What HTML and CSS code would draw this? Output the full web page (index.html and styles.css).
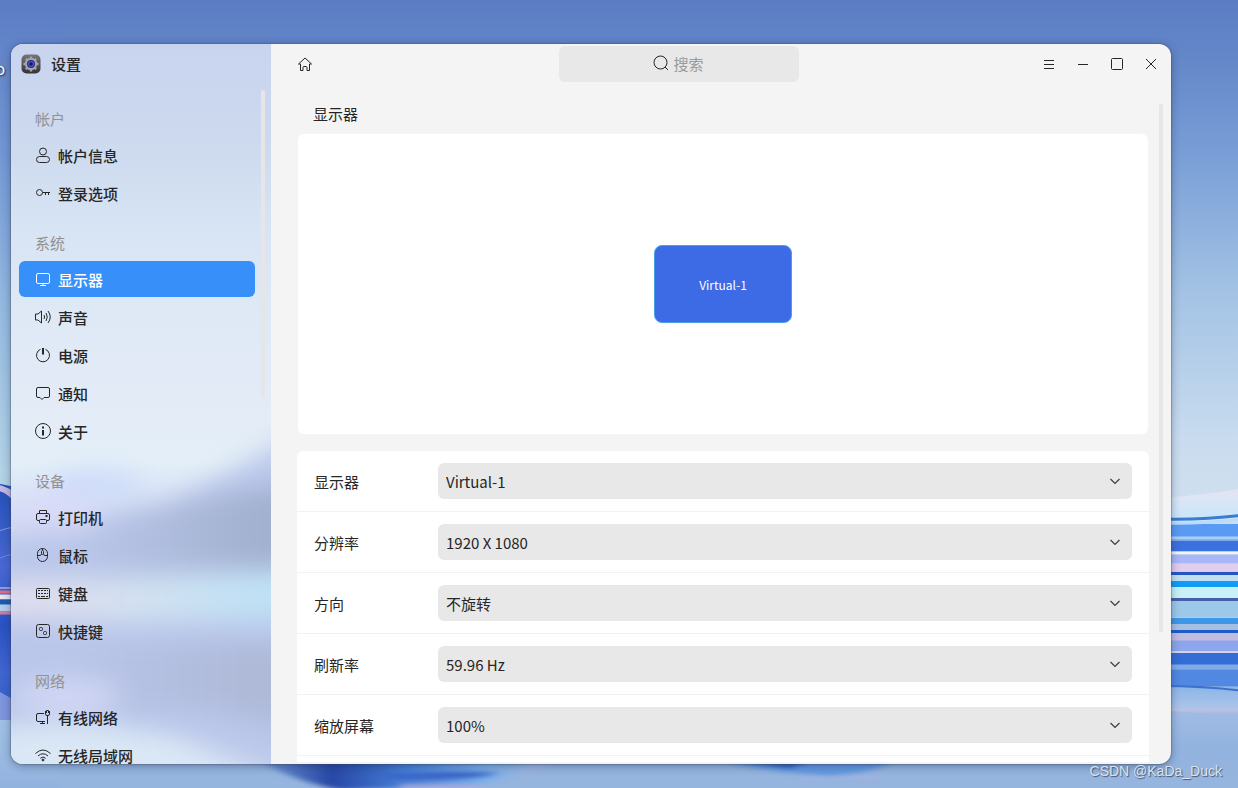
FILE: index.html
```html
<!DOCTYPE html>
<html lang="zh-CN">
<head>
<meta charset="utf-8">
<title>设置</title>
<link rel="stylesheet" href="styles.css">
</head>
<body class="desktop">
<svg class="wallpaper" viewBox="0 0 1238 788" preserveAspectRatio="none" aria-hidden="true">
  <defs>
    <linearGradient id="sky" x1="0" y1="0" x2="0" y2="1">
      <stop offset="0" stop-color="#5b7cc4"/><stop offset=".08" stop-color="#6588c9"/><stop offset=".2" stop-color="#7a9fd7"/>
      <stop offset=".38" stop-color="#a5c4e5"/><stop offset=".56" stop-color="#c9dcef"/><stop offset=".64" stop-color="#cfdfee"/>
      <stop offset=".9" stop-color="#a0bce4"/><stop offset=".95" stop-color="#92b3df"/><stop offset="1" stop-color="#96b5de"/>
    </linearGradient>
    <linearGradient id="leftEdge" x1="0" y1="0" x2="0" y2="1">
      <stop offset="0" stop-color="#5b7cc4"/><stop offset=".2" stop-color="#7498d4"/><stop offset=".38" stop-color="#93b8e0"/>
      <stop offset=".6" stop-color="#b3d3e6"/><stop offset=".9" stop-color="#a3c4e6"/><stop offset="1" stop-color="#93b3df"/>
    </linearGradient>
    <linearGradient id="foam" x1="0" y1="0" x2="0" y2="1">
      <stop offset="0" stop-color="#e6e4f3"/><stop offset="1" stop-color="#c4e7fa"/>
    </linearGradient>
    <linearGradient id="tail" x1="0" y1="0" x2="0" y2="1">
      <stop offset="0" stop-color="#8db5e8"/><stop offset=".7" stop-color="#aac4e8"/><stop offset=".8" stop-color="#b9c1e2"/><stop offset="1" stop-color="#9ab6e1"/>
    </linearGradient>
    <linearGradient id="fold" x1="0" y1="0" x2="0" y2="1">
      <stop offset="0" stop-color="#2450b8"/><stop offset=".35" stop-color="#4a68d4"/><stop offset=".6" stop-color="#2a52c4"/><stop offset=".8" stop-color="#4166d0"/><stop offset="1" stop-color="#2d60c8"/>
    </linearGradient>
    <linearGradient id="petal"><stop offset="0" stop-color="#7aa2de"/><stop offset=".25" stop-color="#2747a5"/><stop offset=".5" stop-color="#4580d8"/><stop offset=".75" stop-color="#79b0ea"/><stop offset="1" stop-color="#b4b8dc"/></linearGradient>
    <filter id="soft" x="-20%" y="-60%" width="140%" height="220%" color-interpolation-filters="sRGB"><feGaussianBlur stdDeviation="5 2"/></filter>
    <filter id="fine" x="-5%" y="-5%" width="110%" height="110%" color-interpolation-filters="sRGB"><feGaussianBlur stdDeviation="0.6"/></filter>
  </defs>
  <rect width="1238" height="788" fill="url(#sky)"/>
  <rect width="60" height="788" fill="url(#leftEdge)"/>
  <g filter="url(#fine)">
    <path d="M-4 483L20 488V720H-4Z" fill="url(#fold)"/>
    <path d="M-4 484Q8 486 20 496V508Q8 492-4 490Z" fill="#c5b8e8"/>
    <path d="M-4 532Q5 528 20 526" stroke="#8b9ae6" fill="none"/>
    <path d="M-4 560Q5 555 20 553" stroke="#7388dc" fill="none"/>
    <path d="M-4 588H20" stroke="#8aa2dc" stroke-width="2"/>
    <path d="M-4 592H20" stroke="#e0708a" stroke-width="3"/>
    <path d="M-4 597H20" stroke="#ece4ee" stroke-width="5"/>
    <path d="M-4 602H20" stroke="#1b5cae" stroke-width="5"/>
    <path d="M-4 608H20" stroke="#b4cdeb" stroke-width="7"/>
    <path d="M-4 613H20" stroke="#ce7f9f" stroke-width="3"/>
    <path d="M-4 690L20 703V720H-4Z" fill="#7f95dc"/>
  </g>
  <g filter="url(#fine)">
    <path d="M1160 498Q1205 495 1244 488V522H1160Z" fill="url(#foam)"/>
    <path d="M1160 524H1244V540H1160Z" fill="#5b9af3"/>
    <path d="M1160 519Q1205 520 1244 515" stroke="#3d7ad4" stroke-width="3" fill="none"/>
    <path d="M1160 523Q1205 524 1244 519" stroke="#bbdcf8" stroke-width="3" fill="none"/>
    <path d="M1160 538H1244" stroke="#a9d0f6" stroke-width="3"/>
    <path d="M1160 546H1244" stroke="#3b70e0" stroke-width="11"/>
    <path d="M1160 553H1244" stroke="#f4f4fb" stroke-width="3"/>
    <path d="M1160 559H1244" stroke="#a8b7f8" stroke-width="9"/>
    <path d="M1160 567.500H1244" stroke="#e0cdf0" stroke-width="8"/>
    <path d="M1160 573.500H1244" stroke="#2456c2" stroke-width="3"/>
    <path d="M1160 578H1244" stroke="#c2def2" stroke-width="6"/>
    <path d="M1160 584H1244" stroke="#109bf6" stroke-width="6"/>
    <path d="M1160 592.500H1244" stroke="#c9f0f8" stroke-width="11"/>
    <path d="M1160 599.500H1244" stroke="#4560a8" stroke-width="3"/>
    <path d="M1160 609H1244" stroke="#9cc8ea" stroke-width="16"/>
    <path d="M1160 621H1244" stroke="#3e96e7" stroke-width="6"/>
    <path d="M1160 627H1244" stroke="#a6c0e4" stroke-width="6"/>
    <path d="M1160 631.500H1244" stroke="#1d5cc6" stroke-width="3"/>
    <path d="M1160 637H1244" stroke="#c0bce0" stroke-width="8"/>
    <path d="M1160 646H1244" stroke="#8ca5ed" stroke-width="11"/>
    <path d="M1160 652H1244" stroke="#d8d2e6" stroke-width="2"/>
    <path d="M1160 659H1244" stroke="#356cd6" stroke-width="12"/>
    <path d="M1160 667H1244" stroke="#82aae6" stroke-width="5"/>
    <path d="M1160 678H1244" stroke="#5189e2" stroke-width="17"/>
    <path d="M1160 687H1244V716Q1205 714 1160 710Z" fill="url(#tail)"/>
    <path d="M1160 686Q1205 686 1244 691" stroke="#3e72cc" stroke-width="2" fill="none"/>
  </g>
  <g filter="url(#soft)">
    <path d="M255 758H560Q530 776 470 786L340 790Q290 780 255 758Z" fill="url(#petal)"/>
    <path d="M375 776Q450 770 500 773Q470 781 400 779Z" fill="#3b62c6"/>
    <path d="M400 786H480" stroke="#b6a8dc" stroke-width="3"/>
    <path d="M710 758H900Q880 772 830 776Q760 772 710 758Z" fill="#6299e2"/>
    <path d="M735 760H810L790 768Z" fill="#3059b8"/>
    <path d="M800 777H880" stroke="#abb4e0" stroke-width="2"/>
  </g>
</svg>

<div class="window">
  <aside class="sidebar">
    <svg class="sidebar-glass" viewBox="0 0 260 720" preserveAspectRatio="none" aria-hidden="true">
      <defs>
        <linearGradient id="glass" x1="0" y1="0" x2="0" y2="1">
          <stop offset="0" stop-color="#c9d4ee"/><stop offset=".13" stop-color="#ccd9ee"/><stop offset=".25" stop-color="#d7e4f4"/><stop offset=".38" stop-color="#dfe9f6"/>
          <stop offset=".5" stop-color="#e3ebf7"/><stop offset=".58" stop-color="#e3eff8"/><stop offset=".66" stop-color="#d3dbf6"/><stop offset="1" stop-color="#d8e2f3"/>
        </linearGradient>
        <linearGradient id="shade" gradientUnits="userSpaceOnUse" x1="60" y1="0" x2="250" y2="0"><stop offset="0" stop-color="#a3b1d0" stop-opacity="0"/><stop offset="1" stop-color="#a3b1d0"/></linearGradient>
        <linearGradient id="shadeLow" gradientUnits="userSpaceOnUse" x1="50" y1="0" x2="230" y2="0"><stop offset="0" stop-color="#afbad9" stop-opacity="0"/><stop offset="1" stop-color="#afbad9"/></linearGradient>
        <linearGradient id="band" gradientUnits="userSpaceOnUse" x1="0" y1="0" x2="250" y2="0"><stop offset="0" stop-color="#dfdcee"/><stop offset=".5" stop-color="#d3e1f0"/><stop offset="1" stop-color="#bfe1f5"/></linearGradient>
        <filter id="haze" filterUnits="userSpaceOnUse" x="-100" y="340" width="460" height="480" color-interpolation-filters="sRGB"><feGaussianBlur stdDeviation="12"/></filter>
      </defs>
      <rect width="260" height="720" fill="url(#glass)"/>
      <g filter="url(#haze)">
        <path d="M320 370Q230 425 150 462Q60 480-60 505V690H160L320 750Z" fill="#bac7ea"/>
        <ellipse cx="85" cy="440" rx="48" ry="12" fill="#cbdafa"/>
        <path d="M320 440Q210 445 60 480V525H320Z" fill="url(#shade)"/>
        <ellipse cx="48" cy="468" rx="44" ry="18" fill="#dadbf7"/>
        <path d="M-60 536L120 534L320 522V575L120 578L-60 574Z" fill="url(#band)"/>
        <path d="M320 600H50V665H200L320 690Z" fill="url(#shadeLow)"/>
        <ellipse cx="55" cy="652" rx="54" ry="16" fill="#d2d7f5"/>
        <path d="M-60 688Q90 665 165 697Q220 715 240 780H-60Z" fill="#dae7f5"/>
      </g>
    </svg>

    <header class="brand">
      <svg class="brand-icon" viewBox="0 0 20 20" aria-hidden="true">
        <defs><linearGradient id="tile" x1="0" y1="0" x2="0" y2="1"><stop offset="0" stop-color="#74767a"/><stop offset="1" stop-color="#333437"/></linearGradient></defs>
        <rect x=".5" y=".5" width="19" height="19" rx="5" fill="url(#tile)"/>
        <g fill="#a3a5ac"><circle cx="10" cy="10" r="6.200"/><g><rect x="8.800" y="2.400" width="2.400" height="15.200" rx=".6"/><rect x="2.400" y="8.800" width="15.200" height="2.400" rx=".6"/></g><g transform="rotate(45 10 10)"><rect x="8.800" y="2.600" width="2.400" height="14.800" rx=".6"/><rect x="2.600" y="8.800" width="14.800" height="2.400" rx=".6"/></g></g>
        <circle cx="10" cy="10" r="4" fill="#32269a"/><circle cx="10" cy="10" r="2.800" fill="#4a62d8"/><circle cx="10" cy="10" r="1.800" fill="#1b1c33"/>
      </svg>
      <h1 class="brand-name">设置</h1>
    </header>

    <nav class="nav">
      <section class="nav-group">
        <h2 class="nav-title">帐户</h2>
        <a class="nav-item" href="#account"><svg class="icon" viewBox="0 0 16 16"><circle cx="8" cy="4.500" r="3.500"/><rect x="1.500" y="9.500" width="13" height="6" rx="3"/></svg>帐户信息</a>
        <a class="nav-item" href="#login"><svg class="icon" viewBox="0 0 16 16"><circle cx="4.500" cy="7.500" r="3"/><path d="M7.500 7.500H15M10.500 7.500V10M13.500 7.500V10"/></svg>登录选项</a>
      </section>
      <section class="nav-group">
        <h2 class="nav-title">系统</h2>
        <a class="nav-item nav-item-active" href="#display" aria-current="page"><svg class="icon" viewBox="0 0 16 16"><rect x="1.500" y="2.500" width="13" height="10" rx="1.500"/><path d="M8 12.500V14M5 14.500H11"/></svg>显示器</a>
        <a class="nav-item" href="#sound"><svg class="icon" viewBox="0 0 16 16"><path d="M.5 5H3L6.500 2V14L3 11H.5ZM9 6Q10.300 8 9 10M11 4Q13.600 8 11 12M13 2Q17.500 8 13 14"/></svg>声音</a>
        <a class="nav-item" href="#power"><svg class="icon" viewBox="0 0 16 16"><path d="M5.500 2.300A6.500 6.500 0 1 0 10.500 2.300"/><path d="M8 1V7.500" stroke-width="2"/></svg>电源</a>
        <a class="nav-item" href="#notice"><svg class="icon" viewBox="0 0 16 16"><path d="M3 2.500H13Q14.500 2.500 14.500 4V11Q14.500 12.500 13 12.500H9L7 14.500L5 12.500H3Q1.500 12.500 1.500 11V4Q1.500 2.500 3 2.500Z"/></svg>通知</a>
        <a class="nav-item" href="#about"><svg class="icon" viewBox="0 0 16 16"><circle cx="8" cy="8" r="7.500"/><path d="M8 3.500V5.500M8 7V12.500" stroke-width="2"/></svg>关于</a>
      </section>
      <section class="nav-group">
        <h2 class="nav-title">设备</h2>
        <a class="nav-item" href="#printer"><svg class="icon" viewBox="0 0 16 16"><path d="M4.500 4.500V1.500H11.500V4.500M4.500 11.500H3Q1.500 11.500 1.500 10V6Q1.500 4.500 3 4.500H13Q14.500 4.500 14.500 6V10Q14.500 11.500 13 11.500H11.500"/><rect x="4.500" y="10.500" width="7" height="4" rx="1"/><path d="M10.500 7H12.500" stroke-width="2"/></svg>打印机</a>
        <a class="nav-item" href="#mouse"><svg class="icon" viewBox="0 0 16 16"><rect x="2.500" y="1.500" width="10" height="13" rx="5"/><path d="M2.500 8.500H5.500L6.500 7M12.500 8.500H9.500L8.500 7M7.500 1.500V3"/><rect x="6.500" y="3.500" width="2" height="4" rx="1"/></svg>鼠标</a>
        <a class="nav-item" href="#keyboard"><svg class="icon" viewBox="0 0 16 16"><rect x="1.500" y="3.500" width="13" height="10" rx="1"/><path d="M3 5.500H13M3 8.500H13M3 11.500H5M11 11.500H13" stroke-dasharray="2 1"/><path d="M6 11.500H10"/></svg>键盘</a>
        <a class="nav-item" href="#shortcut"><svg class="icon" viewBox="0 0 16 16"><rect x="1.500" y="1.500" width="13" height="13" rx="2"/><rect x="4.500" y="4.500" width="3" height="3" rx="1"/><rect x="8.500" y="8.500" width="3" height="3" rx="1"/></svg>快捷键</a>
      </section>
      <section class="nav-group">
        <h2 class="nav-title">网络</h2>
        <a class="nav-item" href="#wired"><svg class="icon" viewBox="0 0 16 16"><path d="M9 4.500H3Q1.500 4.500 1.500 6V11Q1.500 12.500 3 12.500H10M7.500 12.500V14.500M5 14.500H10M12.500 6.500V15M10.500 2V5Q10.500 6.500 12 6.500H13Q14.500 6.500 14.500 5V2M11.500 4V1.500H13.500V4"/></svg>有线网络</a>
        <a class="nav-item" href="#wifi"><svg class="icon" viewBox="0 0 16 16"><path d="M.5 6.500Q8-.5 15.500 6.500M3 9Q8 4.500 13 9M5.300 11.300Q8 8.700 10.700 11.300"/><circle cx="8" cy="13" r=".9" fill="currentColor"/></svg>无线局域网</a>
      </section>
    </nav>
    <div class="sidebar-thumb"></div>
  </aside>

  <main class="content">
    <header class="titlebar">
      <button class="tool home" type="button" aria-label="主页"><svg class="icon" viewBox="0 0 16 16"><path d="M1.500 8L8 2L14.500 8H12.500V14.500H10V11.500Q10 10.500 9 10.500H7Q6 10.500 6 11.500V14.500H3.500V8Z"/></svg></button>
      <label class="search">
        <svg class="icon search-icon" viewBox="0 0 16 16"><circle cx="7.500" cy="7.500" r="6.500"/><path d="M12 12L15 15"/></svg>
        <input class="search-input" type="text" placeholder="搜索" aria-label="搜索">
      </label>
      <div class="controls">
        <button class="tool" type="button" aria-label="菜单"><svg class="icon" viewBox="0 0 16 16"><path d="M3 4.500H13M3 8.500H13M3 12.500H13"/></svg></button>
        <button class="tool" type="button" aria-label="最小化"><svg class="icon" viewBox="0 0 16 16"><path d="M3 8.500H13"/></svg></button>
        <button class="tool" type="button" aria-label="最大化"><svg class="icon" viewBox="0 0 16 16"><rect x="2.500" y="2.500" width="11" height="11" rx="1"/></svg></button>
        <button class="tool" type="button" aria-label="关闭"><svg class="icon" viewBox="0 0 16 16"><path d="M3 3L13 13M13 3L3 13"/></svg></button>
      </div>
    </header>

    <div class="page">
      <h2 class="page-title">显示器</h2>
      <section class="preview"><div class="screen">Virtual-1</div></section>
      <form class="form">
        <div class="row"><label class="row-label" for="monitor">显示器</label><div class="pick"><select class="select" id="monitor"><option>Virtual-1</option></select><svg class="chevron" viewBox="0 0 10 10"><path d="M.5 3L5 7.500L9.500 3"/></svg></div></div>
        <div class="row"><label class="row-label" for="resolution">分辨率</label><div class="pick"><select class="select" id="resolution"><option>1920 X 1080</option></select><svg class="chevron" viewBox="0 0 10 10"><path d="M.5 3L5 7.500L9.500 3"/></svg></div></div>
        <div class="row"><label class="row-label" for="rotation">方向</label><div class="pick"><select class="select" id="rotation"><option>不旋转</option></select><svg class="chevron" viewBox="0 0 10 10"><path d="M.5 3L5 7.500L9.500 3"/></svg></div></div>
        <div class="row"><label class="row-label" for="refresh">刷新率</label><div class="pick"><select class="select" id="refresh"><option>59.96 Hz</option></select><svg class="chevron" viewBox="0 0 10 10"><path d="M.5 3L5 7.500L9.500 3"/></svg></div></div>
        <div class="row"><label class="row-label" for="scale">缩放屏幕</label><div class="pick"><select class="select" id="scale"><option>100%</option></select><svg class="chevron" viewBox="0 0 10 10"><path d="M.5 3L5 7.500L9.500 3"/></svg></div></div>
        <div class="row row-empty"></div>
      </form>
    </div>
    <div class="content-thumb"></div>
  </main>
</div>
<span class="desktop-label">o</span>
<span class="watermark">CSDN @KaDa_Duck</span>
</body>
</html>
```
FILE: styles.css
```css
* {
  box-sizing: border-box;
}

.desktop {
  position: relative;
  display: flex;
  height: 100vh;
  margin: 0;
  padding: 44px 67px 24px 11px;
  overflow: hidden;
  font-family: "Noto Sans CJK SC", "Noto Sans", sans-serif;
  font-size: 15px;
  line-height: 22px;
  color: #262626;
}

.wallpaper,
.sidebar-glass {
  position: absolute;
  inset: 0;
  width: 100%;
  height: 100%;
}

.window {
  position: relative;
  flex: 1;
  display: flex;
  min-width: 0;
  overflow: hidden;
  border-radius: 12px;
  background: #f4f4f4;
  box-shadow: 0 0 1px 1px rgba(60, 70, 90, 0.3), 0 2px 10px rgba(20, 35, 70, 0.4);
}

.icon {
  flex: none;
  width: 16px;
  height: 16px;
  fill: none;
  stroke: currentColor;
  stroke-width: 1;
}

/* Sidebar */

.sidebar {
  position: relative;
  flex: none;
  display: flex;
  flex-direction: column;
  width: 260px;
  overflow: hidden;
}

.brand {
  position: relative;
  flex: none;
  display: flex;
  align-items: center;
  gap: 10px;
  height: 40px;
  padding: 0 10px;
}

.brand-icon {
  width: 20px;
  height: 20px;
}

.brand-name {
  margin: 0;
  font-size: 15px;
  font-weight: 500;
}

.nav {
  position: relative;
  flex: 1;
  display: flex;
  flex-direction: column;
  gap: 14px;
  min-height: 0;
  padding: 17px 16px 0 8px;
}

.nav-group {
  display: flex;
  flex-direction: column;
}

.nav-title {
  margin: 0;
  padding: 0 16px;
  font-size: 15px;
  font-weight: 400;
  line-height: 36px;
  color: #929292;
}

.nav-item {
  display: flex;
  align-items: center;
  gap: 7px;
  height: 36px;
  padding: 2px 16px 0;
  border-radius: 6px;
  font-weight: 500;
  color: #262626;
  text-decoration: none;
}

.nav-item .icon {
  margin-bottom: 2px;
}

.nav-item + .nav-item {
  margin-top: 2px;
}

.nav-item-active {
  background: #3790fa;
  color: #fff;
}

.sidebar-thumb,
.content-thumb {
  position: absolute;
  width: 4px;
  border-radius: 2px;
  background: #e6e6e6;
}

.sidebar-thumb {
  top: 46px;
  right: 6px;
  height: 307px;
}

.content-thumb {
  top: 60px;
  right: 8px;
  height: 528px;
}

/* Title bar */

.content {
  position: relative;
  flex: 1;
  display: flex;
  flex-direction: column;
  min-width: 0;
  padding-bottom: 2px;
}

.titlebar {
  flex: none;
  display: flex;
  align-items: center;
  justify-content: space-between;
  height: 40px;
  padding: 0 5px 0 19px;
}

.tool {
  display: grid;
  place-items: center;
  width: 30px;
  height: 30px;
  padding: 0;
  border: 0;
  border-radius: 6px;
  background: none;
  color: #262626;
}

.home {
  margin-right: 4px;
}

.controls {
  display: flex;
  gap: 4px;
}

.search {
  display: flex;
  align-items: center;
  justify-content: center;
  gap: 5px;
  width: 240px;
  height: 36px;
  border-radius: 6px;
  background: #e8e8e8;
}

.search-icon {
  margin-bottom: 2px;
}

.search-input {
  width: 32px;
  padding: 0;
  border: 0;
  outline: 0;
  background: none;
  font: inherit;
}

.search-input::placeholder {
  color: #9a9a9a;
}

/* Display page */

.page {
  flex: 1;
  display: flex;
  flex-direction: column;
  min-height: 0;
  padding: 19px 22px 0 26px;
  overflow: hidden;
}

.page-title {
  flex: none;
  margin: 0 0 9px;
  padding: 0 16px;
  font-size: 15px;
  font-weight: 400;
}

.preview {
  flex: none;
  display: grid;
  place-items: center;
  height: 300px;
  margin: 0 1px 17px;
  border-radius: 6px;
  background: #fff;
}

.screen {
  display: grid;
  place-items: center;
  width: 138px;
  height: 78px;
  padding-top: 2px;
  border: 1px solid #4aa0e6;
  border-radius: 8px;
  background: #3d6be5;
  font-size: 12px;
  color: #fff;
}

.form {
  flex: none;
  border-radius: 6px;
  background: #fff;
}

.row {
  display: flex;
  align-items: center;
  padding: 12px 17px;
  border-bottom: 1px solid #f2f2f2;
}

.row-empty {
  height: 60px;
  border: 0;
}

.row-label {
  flex: none;
  width: 124px;
  padding-top: 2px;
}

.pick {
  flex: 1;
  display: grid;
  align-items: center;
}

.select,
.chevron {
  grid-area: 1 / 1;
}

.select {
  appearance: none;
  width: 100%;
  height: 36px;
  padding: 2px 32px 0 8px;
  border: 0;
  border-radius: 6px;
  background: #e8e8e8;
  font: inherit;
  color: #262626;
}

.chevron {
  justify-self: end;
  width: 10px;
  height: 10px;
  margin-right: 12px;
  fill: none;
  stroke: #3c3c3c;
  stroke-width: 1.2;
  pointer-events: none;
}

/* Desktop captions */

.desktop-label {
  position: absolute;
  left: -4px;
  top: 58px;
  color: #fff;
  text-shadow: 1px 1px 2px #1c2a4c;
}

.watermark {
  position: absolute;
  right: 16px;
  bottom: 6px;
  font-family: "Liberation Sans", Arial, sans-serif;
  font-size: 14px;
  color: #d9e2ef;
  text-shadow: 1px 1px 1px #45566f;
}
```
